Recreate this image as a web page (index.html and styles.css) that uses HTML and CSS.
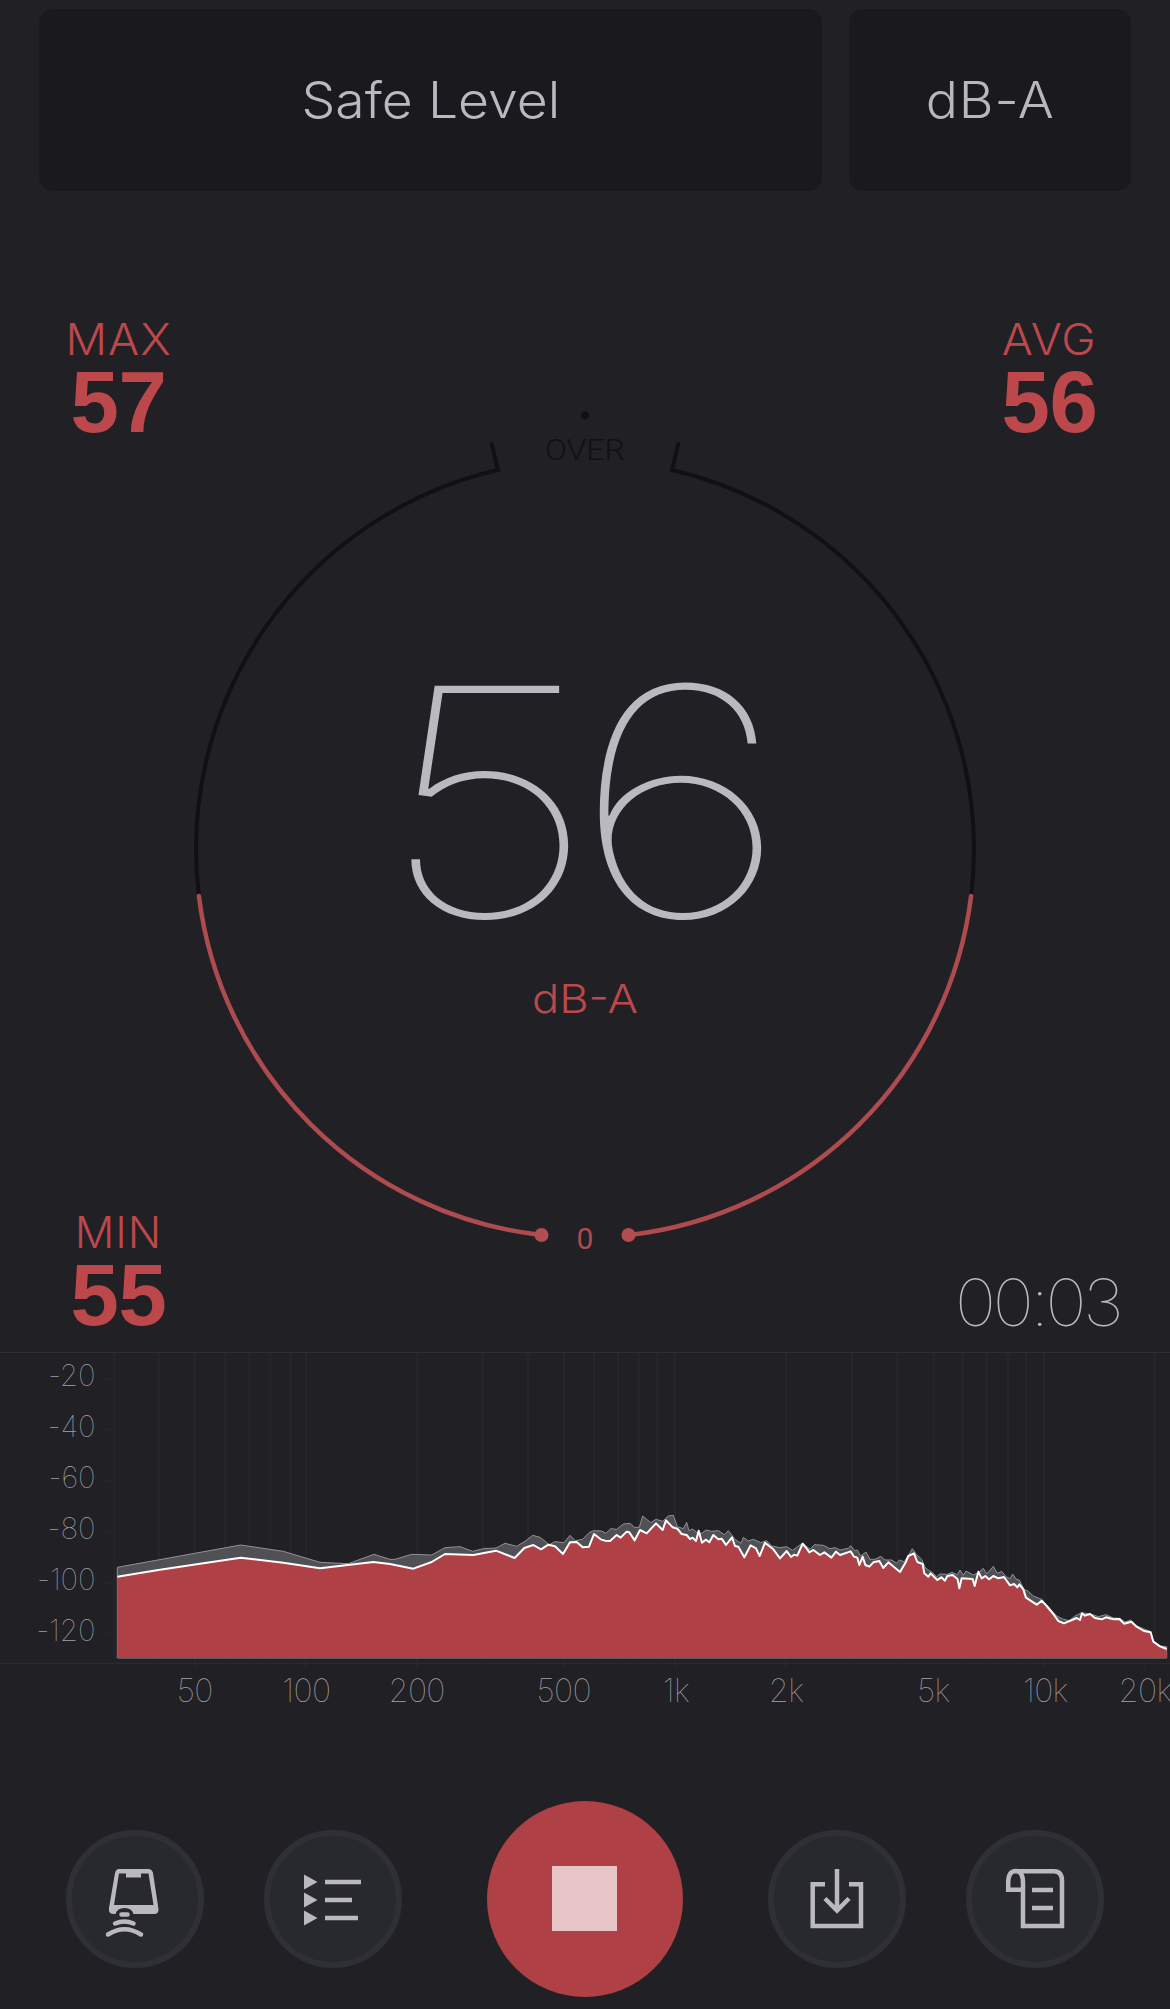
FILE: index.html
```html
<!DOCTYPE html>
<html lang="en">
<head>
<meta charset="utf-8">
<title>Sound Meter</title>
<link rel="stylesheet" href="styles.css">
</head>
<body>
<main class="app">
  <header class="top">
    <div class="panel panel-level"><span>Safe Level</span></div>
    <div class="panel panel-unit"><span>dB-A</span></div>
  </header>

  <section class="meter">
    <svg class="dial" viewBox="180 400 810 870" aria-label="Level dial">
      <circle class="ink-fill" cx="585" cy="415.500" r="4"/>
      <text class="over" x="585" y="460" textLength="80" lengthAdjust="spacingAndGlyphs">OVER</text>
      <path class="track" d="M491.800 444 L498 470 A389 389 0 0 0 198.900 896"/>
      <path class="track" d="M678.200 444 L672 470 A389 389 0 0 1 971.100 896"/>
      <path class="level" d="M198.900 896 A389 389 0 0 0 541 1235"/>
      <path class="level" d="M971.100 896 A389 389 0 0 1 629 1235"/>
      <circle class="level-dot" cx="541.500" cy="1235" r="7"/>
      <circle class="level-dot" cx="628.500" cy="1235" r="7"/>
      <text class="zero" x="585" y="1249">0</text>
      <text class="reading" y="917"><tspan x="379" textLength="217" lengthAdjust="spacingAndGlyphs">5</tspan><tspan x="572" textLength="217" lengthAdjust="spacingAndGlyphs">6</tspan></text>
      <text class="reading-unit" x="585" y="1013" textLength="106" lengthAdjust="spacingAndGlyphs">dB-A</text>
    </svg>
    <div class="corners">
      <div class="stat"><span class="name">MAX</span><b class="value">57</b></div>
      <div class="stat avg"><span class="name">AVG</span><b class="value">56</b></div>
      <div class="stat low"><span class="name">MIN</span><b class="value">55</b></div>
      <time class="timer">00:03</time>
    </div>
  </section>

  <section class="spectrum">
    <svg class="chart" viewBox="0 -384 3510 1134" aria-label="Frequency spectrum">
      <path class="grid" d="M343 -384V540M477 -384V540M585 -384V564M675 -384V540M748 -384V540M811 -384V540M873 -384V540M918 -384V564M1251 -384V564M1449 -384V540M1584 -384V540M1692 -384V564M1782 -384V540M1854 -384V540M1917 -384V540M1971 -384V540M2025 -384V564M2358 -384V564M2556 -384V540M2691 -384V540M2801 -384V564M2888 -384V540M2961 -384V540M3024 -384V540M3078 -384V540M3132 -384V564M3465 -384V540M3433 540V564"/>
      <path class="grid" d="M318 -304H341M318 -151H341M318 2H341M318 155H341M318 308H341M318 461H341"/>
      <path class="frame" d="M0 -382.500H3510M0 550H3510"/>
      <path class="peak" d="M352 534V262L722 195L850 214L960 247L1045 251L1122 223L1170 238L1185 238L1235 223L1295 225L1335 203L1380 200L1418 214L1450 206L1488 204L1515 190L1550 199L1575 184L1598 166L1620 172L1648 194L1665 185L1692 188L1710 166L1726 182L1748 178L1767 158L1782 152L1805 153L1818 160L1832 146L1850 148L1870 132L1890 130L1903 142L1918 142L1928 108L1952 128L1968 118L1988 124L2005 108L2020 106L2032 140L2050 146L2060 127L2067 152L2078 147L2090 157L2105 160L2118 150L2135 154L2155 152L2173 164L2185 152L2205 178L2223 190L2230 172L2245 183L2260 178L2282 188L2300 182L2315 198L2340 203L2360 200L2378 211L2392 200L2408 190L2430 208L2443 194L2470 196L2490 206L2505 203L2520 210L2545 205L2552 197L2565 212L2572 210L2582 228L2598 216L2610 238L2625 238L2642 229L2655 240L2675 240L2690 250L2698 240L2712 245L2725 228L2737 206L2748 222L2765 238L2775 262L2785 270L2795 276L2810 290L2820 282L2842 283L2856 277L2872 284L2880 270L2890 286L2898 273L2920 285L2935 278L2950 265L2960 282L2980 259L2992 280L3005 274L3020 292L3030 296L3038 282L3048 297L3058 300L3072 328L3085 334L3100 348L3125 358L3140 375L3170 408L3190 418L3208 422L3225 408L3245 398L3275 403L3295 410L3318 404L3340 414L3360 415L3375 426L3392 420L3410 438L3452 455L3460 482L3480 498L3500 500V534Z"/>
      <path class="live" d="M352 534V290L475 270L590 253L722 233L850 248L960 265L1120 246L1170 252L1240 266L1295 246L1335 222L1420 225L1488 212L1544 234L1573 204L1600 195L1623 208L1645 194L1665 199L1689 222L1710 187L1730 186L1748 202L1767 200L1782 162L1802 178L1815 182L1830 183L1850 165L1862 173L1880 155L1888 157L1904 181L1920 150L1940 160L1968 130L1988 150L1998 121L2018 142L2032 146L2045 162L2060 165L2070 177L2078 173L2088 183L2096 152L2106 188L2118 179L2128 187L2140 165L2155 178L2165 176L2178 195L2196 172L2205 198L2215 200L2233 232L2252 196L2268 205L2279 228L2295 188L2320 208L2340 235L2360 213L2373 231L2382 224L2392 227L2408 191L2422 208L2428 217L2440 210L2460 225L2473 217L2494 233L2508 215L2520 225L2552 214L2562 230L2572 233L2578 255L2588 230L2596 255L2608 260L2620 247L2638 243L2650 264L2665 247L2700 276L2718 245L2725 228L2742 220L2752 246L2768 252L2773 280L2785 290L2792 280L2812 300L2824 292L2835 302L2842 288L2858 285L2873 298L2878 325L2885 295L2918 297L2924 318L2935 275L2945 295L2956 288L2967 298L2980 288L2995 295L3012 291L3030 316L3042 312L3052 322L3058 313L3070 328L3078 353L3110 374L3125 362L3140 378L3160 402L3175 423L3192 430L3230 414L3240 420L3246 400L3255 407L3270 402L3285 414L3305 418L3318 412L3340 418L3358 417L3372 431L3394 425L3410 440L3432 453L3452 457L3460 485L3480 499L3500 507V534Z"/>
      <path class="line" d="M352 290L475 270L590 253L722 233L850 248L960 265L1120 246L1170 252L1240 266L1295 246L1335 222L1420 225L1488 212L1544 234L1573 204L1600 195L1623 208L1645 194L1665 199L1689 222L1710 187L1730 186L1748 202L1767 200L1782 162L1802 178L1815 182L1830 183L1850 165L1862 173L1880 155L1888 157L1904 181L1920 150L1940 160L1968 130L1988 150L1998 121L2018 142L2032 146L2045 162L2060 165L2070 177L2078 173L2088 183L2096 152L2106 188L2118 179L2128 187L2140 165L2155 178L2165 176L2178 195L2196 172L2205 198L2215 200L2233 232L2252 196L2268 205L2279 228L2295 188L2320 208L2340 235L2360 213L2373 231L2382 224L2392 227L2408 191L2422 208L2428 217L2440 210L2460 225L2473 217L2494 233L2508 215L2520 225L2552 214L2562 230L2572 233L2578 255L2588 230L2596 255L2608 260L2620 247L2638 243L2650 264L2665 247L2700 276L2718 245L2725 228L2742 220L2752 246L2768 252L2773 280L2785 290L2792 280L2812 300L2824 292L2835 302L2842 288L2858 285L2873 298L2878 325L2885 295L2918 297L2924 318L2935 275L2945 295L2956 288L2967 298L2980 288L2995 295L3012 291L3030 316L3042 312L3052 322L3058 313L3070 328L3078 353L3110 374L3125 362L3140 378L3160 402L3175 423L3192 430L3230 414L3240 420L3246 400L3255 407L3270 402L3285 414L3305 418L3318 412L3340 418L3358 417L3372 431L3394 425L3410 440L3432 453L3452 457L3460 485L3480 499L3500 507"/>
      <g class="y-labels">
        <text x="286" y="-281">-20</text><text x="286" y="-128">-40</text><text x="286" y="25">-60</text><text x="286" y="178">-80</text><text x="286" y="331">-100</text><text x="286" y="484">-120</text>
      </g>
      <g class="x-labels">
        <text x="584" y="667">50</text><text x="919" y="667">100</text><text x="1250" y="667">200</text><text x="1691" y="667">500</text><text x="2028" y="667">1k</text><text x="2358" y="667">2k</text><text x="2800" y="667">5k</text><text x="3136" y="667">10k</text><text x="3435" y="667">20k</text>
      </g>
    </svg>
  </section>

  <nav class="controls">
    <button class="round" aria-label="Device">
      <svg viewBox="0 0 138 138"><path class="solid" fill-rule="evenodd" d="M53 39H82Q86 39 87 43L92.500 79Q93 84 88 84H67.500Q66 78 58.500 78Q51 78 49.500 84H48Q42 84 43 78L49 43Q50 39 53 39ZM53 43.500L48 75H87.500L82.500 43.500H75V47.500H60V43.500Z"/><path class="rounded" d="M55.500 84.500H61.500M49 93.500Q58.500 89.500 67.500 93.500M42 104.500Q58.500 94 75 104.500"/></svg>
    </button>
    <button class="round" aria-label="List">
      <svg viewBox="0 0 138 138"><path class="solid" d="M40 44.500L53.500 52L40 59.500ZM40 62.500L53.500 70L40 77.500ZM40 80.500L53.500 88L40 95.500Z"/><path class="stroke" d="M61 52H97M61 70H88M61 88H94"/></svg>
    </button>
    <button class="stop" aria-label="Stop"><span class="square"></span></button>
    <button class="round" aria-label="Save">
      <svg viewBox="0 0 138 138"><path class="stroke" d="M57 54.200H44.700V96H93V54.200H81"/><path class="stroke" d="M69 39V80M57 68.500L69 80.500L81 68.500"/></svg>
    </button>
    <button class="round" aria-label="Log">
      <svg viewBox="0 0 138 138"><path class="stroke" d="M57 59.700H42.200V53Q42.200 41 49.700 41Q57 41 57 53V96H96V51Q96 41.200 88 41.200H49.700M66 60H87M66 78H87"/></svg>
    </button>
  </nav>
</main>
</body>
</html>
```
FILE: styles.css
```css
* { box-sizing: border-box; }
body { margin: 0; background: #212025; color: #bab9bf; font-family: Inter, "Liberation Sans", sans-serif; }
.app { width: 1170px; height: 2009px; overflow: hidden; display: flex; flex-direction: column; }

.top { display: grid; grid-template-columns: 783px 282px; gap: 27px; padding: 9px 39px 0; height: 191px; }
.panel { display: flex; align-items: center; justify-content: center; background: #1a191e; border-radius: 14px; font-size: 50px; font-weight: 300; }
.panel span { transform: scaleX(1.07); }
.panel-level { letter-spacing: 0; }
.panel-unit { color: #b9b8b8; letter-spacing: 0.800px; }

.meter { display: grid; height: 1161px; }
.dial { grid-area: 1 / 1; width: 810px; height: 870px; margin: 209px 0 0 180px; }
.ink-fill { fill: #111114; }
.track { fill: none; stroke: #111114; stroke-width: 4; stroke-linecap: round; }
.level { fill: none; stroke: #ae4b4e; stroke-width: 4.5; stroke-linecap: round; }
.level-dot { fill: #b24e50; }
.over, .zero, .reading-unit { text-anchor: middle; }
.over { fill: #111114; font: 300 29px Roboto, sans-serif; }
.zero { fill: #ae4b4e; font: 400 30px Roboto, sans-serif; }
.reading { fill: #bab9bf; font-size: 318px; font-weight: 100; }
.reading-unit { fill: #bc484c; font-size: 40px; font-weight: 300; }

.corners { grid-area: 1 / 1; display: grid; grid-template-columns: 100px 200px; justify-content: space-between; grid-template-rows: 893px auto; padding: 123px 50px 0 68px; }
.stat { display: flex; flex-direction: column; align-items: center; width: 101px; color: #bc484c; }
.avg { justify-self: end; margin-right: 20px; }
.name { font-size: 44px; font-weight: 300; line-height: 50px; letter-spacing: 1px; transform: scaleX(1.05); }
.low .name { transform: none; }
.value { font: 700 87px/75px "Liberation Sans", sans-serif; letter-spacing: -0.500px; }
.timer { justify-self: end; align-self: start; margin-top: 58px; font-size: 65px; line-height: 75px; font-weight: 100; letter-spacing: -3.500px; white-space: nowrap; transform: scaleX(1.08); transform-origin: right; }

.spectrum { height: 378px; }
.chart { display: block; width: 1170px; height: 378px; }
.grid { fill: none; stroke: #26252a; stroke-width: 6; }
.frame { fill: none; stroke: #2e2d33; stroke-width: 3; }
.peak { fill: #515055; stroke: #929196; stroke-width: 3; }
.live { fill: #ae4046; }
.line { fill: none; stroke: #fff; stroke-width: 6; stroke-linejoin: round; }
.y-labels, .x-labels { fill: #a3a2a8; font-weight: 100; }
.y-labels { font-size: 89px; text-anchor: end; letter-spacing: -0.500px; }
.x-labels { font-size: 97px; text-anchor: middle; letter-spacing: -2px; }

.controls { display: flex; align-items: center; height: 196px; margin-top: 71px; padding: 0 66px; }
.round, .stop { padding: 0; border: 0; border-radius: 50%; flex: none; }
.round { width: 138px; height: 138px; border: 6px solid #2f3035; background: #28292e; }
.round + .round { margin-left: 60px; }
.round svg { display: block; width: 138px; height: 138px; margin: -6px; }
.stop { display: flex; align-items: center; justify-content: center; width: 196px; height: 196px; margin: 0 85px; background: #ae4046; }
.square { width: 65px; height: 65px; margin: 0 1px 1px 0; background: #e8c6c8; }
.solid { fill: #bab9bf; }
.stroke, .rounded { fill: none; stroke: #bab9bf; stroke-width: 4.500; }
.rounded { stroke-linecap: round; }
```
